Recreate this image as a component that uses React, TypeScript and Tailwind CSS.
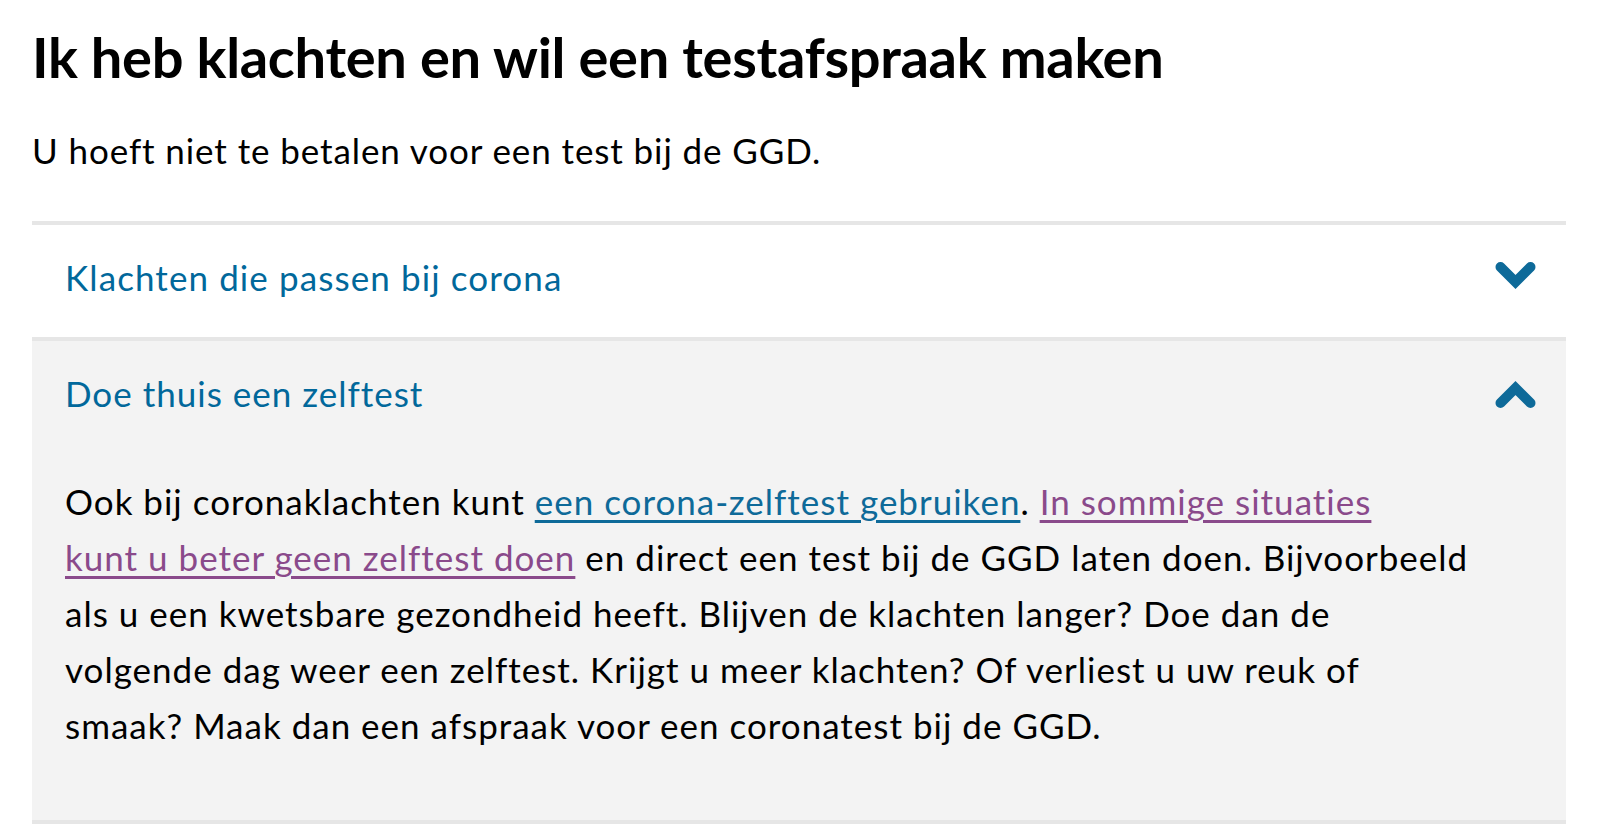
import React from "react";

function Chevron({ up }: { up?: boolean }) {
  return (
    <svg width="42" height="30" viewBox="0 0 42 30" className="shrink-0" aria-hidden="true">
      <path
        d={up ? "M5.5 25 L20.5 10 L35.5 25" : "M5.5 5 L20.5 20 L35.5 5"}
        fill="none"
        stroke="#0e6a99"
        strokeWidth="10"
        strokeLinecap="round"
        strokeLinejoin="miter"
      />
    </svg>
  );
}

export default function App() {
  const font = { fontFamily: "Lato, 'Noto Sans', sans-serif" };
  return (
    <div className="min-h-screen bg-white text-black px-[32px] pt-[23px]" style={font}>
      <h1 className="text-[56px] leading-[67px] font-bold tracking-[-0.3px]">
        Ik heb klachten en wil een testafspraak maken
      </h1>
      <p className="mt-[32px] text-[35px] leading-[56px] tracking-[0.9px]">
        U hoeft niet te betalen voor een test bij de GGD.
      </p>
      <div className="mt-[43px] border-t-4 border-[#e6e6e6]">
        <div className="flex items-center justify-between pl-[33px] pr-[29px] pt-[24px] pb-[32px]">
          <span className="text-[35px] leading-[56px] tracking-[1.1px] text-[#01689b]">Klachten die passen bij corona</span>
          <Chevron />
        </div>
        <div className="border-t-4 border-[#e6e6e6] bg-[#f3f3f3] border-b-4">
          <div className="flex items-center justify-between pl-[33px] pr-[29px] pt-[24px]">
            <span className="text-[35px] leading-[56px] tracking-[1px] text-[#01689b]">Doe thuis een zelftest</span>
            <Chevron up />
          </div>
          <p className="pl-[33px] pr-[31px] mt-[52px] pb-[67px] text-[35px] leading-[56px] tracking-[1px] whitespace-nowrap">
            Ook bij coronaklachten kunt{" "}
            <a href="#" className="text-[#0e6a99] underline decoration-[3px] underline-offset-[5px]">
              een corona-zelftest gebruiken
            </a>
            .{" "}
            <a href="#" className="text-[#8a4a8b] underline decoration-[3px] underline-offset-[5px]">
              In sommige situaties
              <br />
              kunt u beter geen zelftest doen
            </a>{" "}
            en direct een test bij de GGD laten doen. Bijvoorbeeld
            <br />
            als u een kwetsbare gezondheid heeft. Blijven de klachten langer? Doe dan de
            <br />
            volgende dag weer een zelftest. Krijgt u meer klachten? Of verliest u uw reuk of
            <br />
            smaak? Maak dan een afspraak voor een coronatest bij de GGD.
          </p>
        </div>
      </div>
    </div>
  );
}
